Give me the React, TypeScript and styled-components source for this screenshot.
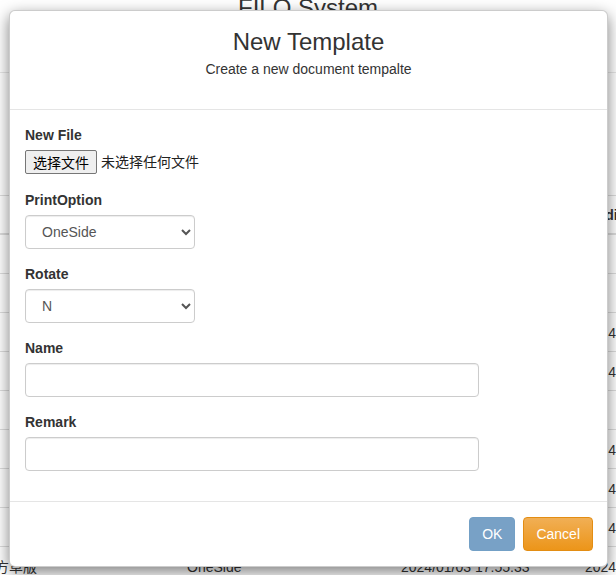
import React from "react";
import styled, { createGlobalStyle } from "styled-components";

const GlobalStyle = createGlobalStyle`
  html, body {
    margin: 0;
    padding: 0;
    background: #fff;
    overflow: hidden;
  }
  body {
    font-family: "Liberation Sans", Arial, "Noto Sans CJK SC", sans-serif;
    font-size: 14px;
    line-height: 20px;
    color: #333;
  }
  * { box-sizing: border-box; }
`;

const Page = styled.div`
  position: relative;
  width: 616px;
  height: 575px;
  overflow: hidden;
`;

const SiteHeader = styled.header`
  height: 78px;
  border-bottom: 1px solid #e7e7e7;
  text-align: center;
`;

const SiteTitle = styled.h1`
  margin: -5px 0 0;
  font-size: 24px;
  line-height: 26px;
  font-weight: normal;
  color: #333;
`;

const Toolbar = styled.div`
  height: 122px;
`;

const DataTable = styled.table`
  margin-left: -13px;
  border-collapse: collapse;
  table-layout: fixed;
  width: 800px;
`;

const HeadCell = styled.th<{ $w: number }>`
  width: ${(p) => p.$w}px;
  text-align: left;
  font-weight: bold;
  padding: 9px 8px 8px;
  border-top: 1px solid #ddd;
  border-bottom: 2px solid #ddd;
  white-space: nowrap;
  overflow: hidden;
`;

const Cell = styled.td`
  padding: 10px 8px 8px;
  border-top: 1px solid #ddd;
  white-space: nowrap;
  overflow: hidden;
`;

const Modal = styled.div`
  position: absolute;
  top: 10px;
  left: 9px;
  width: 599px;
  background: #fff;
  border: 1px solid rgba(0, 0, 0, 0.2);
  border-radius: 6px;
  box-shadow: 0 5px 15px rgba(0, 0, 0, 0.5);
`;

const ModalHeader = styled.div`
  padding: 18px 15px 30px;
  border-bottom: 1px solid #e5e5e5;
  text-align: center;
`;

const ModalTitle = styled.h3`
  margin: 0;
  font-size: 24px;
  line-height: 26px;
  font-weight: normal;
  color: #333;
`;

const ModalSubtitle = styled.p`
  margin: 4px 0 0;
  font-size: 14px;
  line-height: 20px;
  color: #333;
`;

const ModalBody = styled.div`
  padding: 15px;
`;

const FormGroup = styled.div`
  margin-bottom: 15px;
`;

const Label = styled.label`
  display: block;
  font-weight: bold;
  margin-bottom: 5px;
  line-height: 20px;
`;

const FileRow = styled.div`
  display: flex;
  align-items: flex-start;
  gap: 4px;
  height: 25px;
  font-family: "Noto Sans CJK SC", sans-serif;
  font-size: 14px;
  line-height: 22px;
  color: #222;
`;

const FileButton = styled.span`
  display: inline-flex;
  align-items: center;
  justify-content: center;
  width: 72px;
  height: 24px;
  border: 1px solid #767676;
  border-radius: 2px;
  background: #efefef;
  color: #000;
`;

const Select = styled.select`
  display: block;
  width: 170px;
  height: 34px;
  padding: 6px 12px;
  font-family: "Liberation Sans", Arial, sans-serif;
  font-size: 14px;
  color: #555;
  background-color: #fff;
  border: 1px solid #ccc;
  border-radius: 4px;
  box-shadow: inset 0 1px 1px rgba(0, 0, 0, 0.075);
`;

const TextInput = styled.input`
  display: block;
  width: 454px;
  height: 34px;
  padding: 6px 12px;
  font-family: "Liberation Sans", Arial, sans-serif;
  font-size: 14px;
  color: #555;
  background: #fff;
  border: 1px solid #ccc;
  border-radius: 4px;
  box-shadow: inset 0 1px 1px rgba(0, 0, 0, 0.075);
`;

const ModalFooter = styled.div`
  display: flex;
  justify-content: flex-end;
  gap: 8px;
  padding: 15px 14px 15px 15px;
  border-top: 1px solid #e5e5e5;
`;

const Button = styled.button<{ $variant: "primary" | "warning" }>`
  height: 34px;
  padding: 6px 12px;
  font-family: "Liberation Sans", Arial, sans-serif;
  font-size: 14px;
  line-height: 20px;
  color: #fff;
  border-radius: 4px;
  cursor: pointer;
  ${(p) =>
    p.$variant === "primary"
      ? `
    background: #78a1c6;
    border: 1px solid #73a0c6;
  `
      : `
    background: linear-gradient(to bottom, #f1af55 0%, #ec9519 100%);
    border: 1px solid #e38d13;
  `}
`;

type Row = { name: string; opt: string; created: string; modified: string };

const rows: Row[] = [
  { name: "", opt: "OneSide", created: "2024/01/02 09:12:40", modified: "" },
  { name: "", opt: "OneSide", created: "2024/01/02 10:21:05", modified: "" },
  { name: "", opt: "OneSide", created: "2024/01/02 13:45:17", modified: "2024/01/02 13:45:17" },
  { name: "", opt: "OneSide", created: "2024/01/02 15:02:48", modified: "2024/01/02 15:02:48" },
  { name: "", opt: "OneSide", created: "2024/01/02 16:30:11", modified: "" },
  { name: "", opt: "OneSide", created: "2024/01/03 09:08:26", modified: "2024/01/03 09:08:26" },
  { name: "", opt: "OneSide", created: "2024/01/03 11:14:52", modified: "2024/01/03 11:14:52" },
  { name: "", opt: "OneSide", created: "2024/01/03 14:40:09", modified: "2024/01/03 14:40:09" },
  { name: "方草版", opt: "OneSide", created: "2024/01/03 17:55:33", modified: "2024/01/03 17:55:33" },
];

export default function App() {
  return (
    <>
      <GlobalStyle />
      <Page>
        <SiteHeader>
          <SiteTitle>FILO System</SiteTitle>
        </SiteHeader>
        <Toolbar />
        <DataTable>
          <thead>
            <tr>
              <HeadCell $w={192}></HeadCell>
              <HeadCell $w={214}>PrintOption</HeadCell>
              <HeadCell $w={184}>CreateDate</HeadCell>
              <HeadCell $w={210}>ModifyDate</HeadCell>
            </tr>
          </thead>
          <tbody>
            {rows.map((r, i) => (
              <tr key={i}>
                <Cell>{r.name}</Cell>
                <Cell>{r.opt}</Cell>
                <Cell>{r.created}</Cell>
                <Cell>{r.modified}</Cell>
              </tr>
            ))}
          </tbody>
        </DataTable>

        <Modal>
          <ModalHeader>
            <ModalTitle>New Template</ModalTitle>
            <ModalSubtitle>Create a new document tempalte</ModalSubtitle>
          </ModalHeader>
          <ModalBody>
            <FormGroup>
              <Label>New File</Label>
              <FileRow>
                <FileButton>选择文件</FileButton>
                <span>未选择任何文件</span>
              </FileRow>
            </FormGroup>
            <FormGroup>
              <Label>PrintOption</Label>
              <Select defaultValue="OneSide">
                <option>OneSide</option>
                <option>TwoSide</option>
              </Select>
            </FormGroup>
            <FormGroup>
              <Label>Rotate</Label>
              <Select defaultValue="N">
                <option>N</option>
                <option>Y</option>
              </Select>
            </FormGroup>
            <FormGroup>
              <Label>Name</Label>
              <TextInput type="text" />
            </FormGroup>
            <FormGroup>
              <Label>Remark</Label>
              <TextInput type="text" />
            </FormGroup>
          </ModalBody>
          <ModalFooter>
            <Button $variant="primary">OK</Button>
            <Button $variant="warning">Cancel</Button>
          </ModalFooter>
        </Modal>
      </Page>
    </>
  );
}
